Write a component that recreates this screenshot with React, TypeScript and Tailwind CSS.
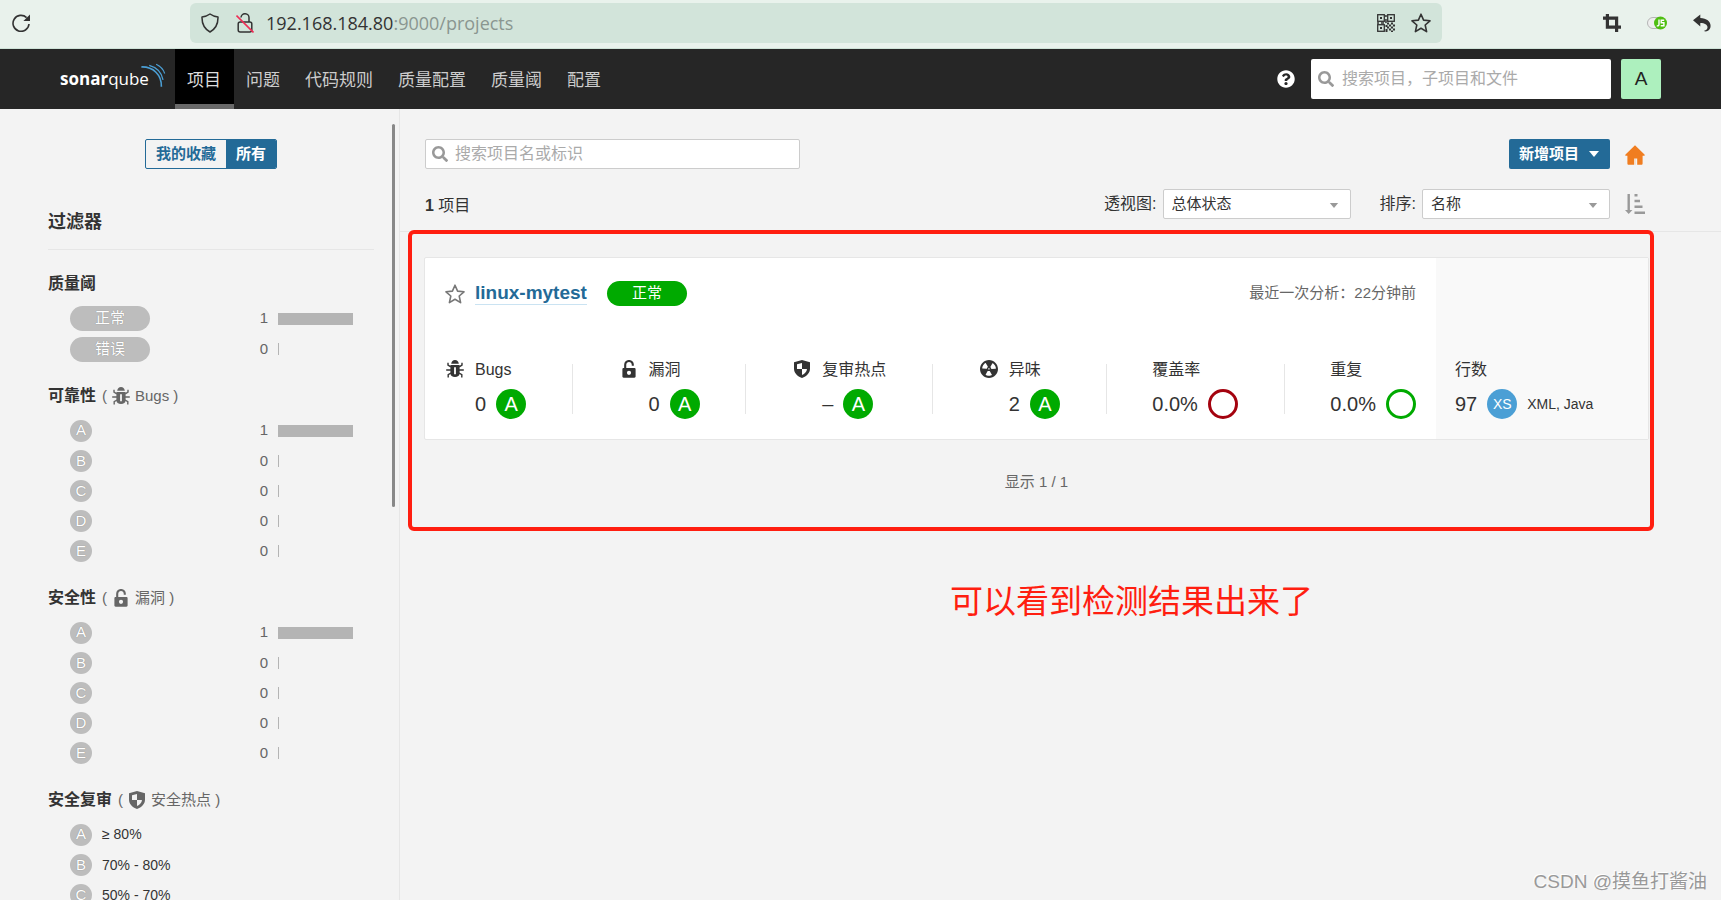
import type { ReactNode } from 'react'
import { FaQuestionCircle, FaSearch } from 'react-icons/fa'

/* ---------- icons ---------- */

type IconProps = { className?: string }

const BugIcon = ({ className = '' }: IconProps) => (
  <svg viewBox="0 0 18 18" className={className} aria-hidden="true">
    <path fill="currentColor" d="M5.2 3.800C5.400 1.600 7 .1 9 .1s3.600 1.500 3.800 3.700z" />
    <path
      fill="currentColor"
      fillRule="evenodd"
      d="M4.400 5h9.200v8.600c0 2.200-1.900 3.500-4.600 3.500s-4.600-1.300-4.600-3.500zM8.100 7.200v7h1.800v-7z"
    />
    <path
      fill="none"
      stroke="currentColor"
      strokeWidth="1.400"
      d="M2 2.800v2.200l2.800 1.800M16 2.800v2.200l-2.800 1.800M.2 10h5M12.800 10h5M5 13l-2.800 1.600v3M13 13l2.800 1.600v3"
    />
  </svg>
)

const LockIcon = ({ className = '' }: IconProps) => (
  <svg viewBox="0 0 18 18" className={className} aria-hidden="true">
    <path fill="none" stroke="currentColor" strokeWidth="2.1" d="M5.2 8.6V4.8a3.800 3.800 0 0 1 7.600 0v1" />
    <path
      fill="currentColor"
      fillRule="evenodd"
      d="M3.600 8h10.800c.7 0 1.200.5 1.200 1.200v7.400c0 .7-.5 1.200-1.200 1.200H3.600c-.7 0-1.200-.5-1.200-1.200V9.200C2.400 8.500 2.900 8 3.600 8zM9 10.700a2.100 2.100 0 1 0 0 4.200a2.100 2.100 0 1 0 0-4.200z"
    />
  </svg>
)

const ShieldIcon = ({ className = '' }: IconProps) => (
  <svg viewBox="0 0 18 18" className={className} aria-hidden="true">
    <path
      fill="currentColor"
      fillRule="evenodd"
      d="M9 0l8 2.200v6.300c0 4.500-3.300 7.900-8 9.500c-4.700-1.600-8-5-8-9.500V2.200zM9 3L4 4.300V9h5zM9 9v6c2.900-1.200 4.700-3.300 5-6z"
    />
  </svg>
)

const SmellIcon = ({ className = '' }: IconProps) => (
  <svg viewBox="2 2 12 12" className={className} aria-hidden="true">
    <path
      fill="currentColor"
      d="M8 2C4.700 2 2 4.700 2 8s2.700 6 6 6 6-2.700 6-6-2.700-6-6-6zm-.5 5.500h.9v.9h-.9v-.9zm-3.800.2c-.1 0-.2-.1-.2-.2 0-.4.1-1.200.6-2S5.300 4.200 5.600 4c.2 0 .3 0 .3.1l1.300 2.300c0 .1 0 .2-.1.2-.1.2-.2.3-.3.5-.1.2-.2.4-.2.5 0 .1-.1.2-.2.2l-2.700-.1zM9.900 12c-.3.2-1.100.5-2 .5-.9 0-1.700-.3-2-.5-.1 0-.1-.2-.1-.3l1.300-2.300c0-.1.1-.1.2-.1.2.1.3.1.5.1s.4 0 .5-.1c.1 0 .2 0 .2.1l1.300 2.300c.2.2.2.3.1.3zm2.500-4.100L9.700 8c-.1 0-.2-.1-.2-.2 0-.2-.1-.4-.2-.5 0-.1-.1-.3-.3-.4-.1 0-.1-.2-.1-.3l1.300-2.300c.1-.1.2-.1.3-.1.3.2 1 .7 1.500 1.500s.6 1.600.6 2c0 0-.1.1-.2.1z"
    />
  </svg>
)

const StarIcon = ({ className = '' }: IconProps) => (
  <svg viewBox="0 0 20 20" className={className} aria-hidden="true">
    <path
      fill="none"
      stroke="currentColor"
      strokeWidth="1.600"
      strokeLinejoin="round"
      d="M10 1.200l2.600 5.900 6.400.7-4.800 4.200 1.400 6.600-5.600-3.400-5.600 3.400 1.400-6.600L1 7.800l6.400-.7z"
    />
  </svg>
)

const ReloadIcon = () => (
  <svg viewBox="0 0 18 18" className="size-[18px]" aria-hidden="true">
    <path fill="none" stroke="currentColor" strokeWidth="1.600" d="M14.600 3.600A8 8 0 1 0 17 10" />
    <path fill="currentColor" d="M18 .4V7h-6.600z" />
  </svg>
)

const OutlineShield = () => (
  <svg viewBox="0 0 18 20" className="h-5 w-[18px]" aria-hidden="true">
    <path
      fill="none"
      stroke="currentColor"
      strokeWidth="1.500"
      strokeLinejoin="round"
      d="M9 1c2.200 1.700 4.800 2.600 8 2.900.2 6.800-2 11.700-8 15.100C3 15.600.8 10.700 1 3.900 4.200 3.600 6.800 2.700 9 1z"
    />
  </svg>
)

const InsecureLock = () => (
  <svg viewBox="0 0 18 20" className="h-5 w-[18px]" aria-hidden="true">
    <rect x="2.200" y="9" width="13.600" height="10" rx="2" fill="none" stroke="currentColor" strokeWidth="1.500" />
    <path fill="none" stroke="currentColor" strokeWidth="1.500" d="M5 4.500a4 4 0 0 1 8 .5v4" />
    <path stroke="#ef2d56" strokeWidth="1.600" d="M.5 2.500l17 17" />
  </svg>
)

const QrIcon = () => (
  <svg viewBox="0 0 18 18" className="size-[18px]" aria-hidden="true">
    <g fill="none" stroke="currentColor" strokeWidth="1.300">
      <rect x=".7" y=".7" width="6.600" height="6.600" />
      <rect x="10.700" y=".7" width="6.600" height="6.600" />
      <rect x=".7" y="10.700" width="6.600" height="6.600" />
    </g>
    <path
      fill="currentColor"
      d="M3 3h2v2H3zM13 3h2v2h-2zM3 13h2v2H3zM8.200 1h1.500v2H8.200zM8.200 5h1.500v4H8.200zM0 8.200h2v1.500H0zM4 8.200h3v1.500H4zM10 8.500h2v2h-2zM14 8.500h2v2h-2zM12 10.500h2v2h-2zM16 10.500h2v2h-2zM8.500 11h2v2h-2zM10 12.500h2v2h-2zM14 12.500h2v2h-2zM12 14.500h2v2h-2zM16 14.500h2v2h-2zM8.500 15h2v3h-2zM14 16.500h2V18h-2z"
    />
  </svg>
)

const CropIcon = () => (
  <svg viewBox="0 0 18 18" className="size-[18px]" aria-hidden="true">
    <path fill="none" stroke="currentColor" strokeWidth="3.200" d="M4.400 0v13.200H18M0 4.200h13.600V18" />
  </svg>
)

const ScriptToggle = () => (
  <svg viewBox="0 0 20 14" className="h-3.5 w-5" aria-hidden="true">
    <rect x=".5" y="1.500" width="16" height="11" rx="5.500" fill="#eee" stroke="#b5b5b5" />
    <circle cx="13.500" cy="7" r="6.500" fill="#4fbf12" />
    <path
      fill="none"
      stroke="#fff"
      strokeWidth="1.400"
      d="M12 3.600v5c0 1-.7 1.500-2.200 1.200M17.200 4.200h-3v2.500h2.700v3.100h-3.200"
    />
  </svg>
)

const BackArrow = () => (
  <svg viewBox="0 0 18 18" className="size-[18px]" aria-hidden="true">
    <path
      fill="currentColor"
      d="M0 6.300L7.300.5v3.600C13.500 4.300 17.600 7.500 17.600 12c0 2.400-1.400 4.300-3.800 5.300-1 .2-2.200 0-3-.2 2.600-.7 3.900-2 3.700-4-.2-2.300-2.600-4-7.200-4v3.400z"
    />
  </svg>
)

const HomeIcon = () => (
  <svg viewBox="0 0 20 20" className="size-5" aria-hidden="true">
    <path
      fill="#f07d20"
      d="M10 .2l9.500 9.200c.5.6.2 1.400-.5 1.400h-1.400v7.700c0 .7-.5 1.300-1.200 1.300h-4.200v-6.200h-1.400v6.200H3.600c-.7 0-1.200-.6-1.200-1.300v-7.700H1c-.7 0-1-.8-.5-1.400z"
    />
    <path fill="#f3f3f3" d="M9.200 13.400h1.600V20H9.200z" />
  </svg>
)

const SortIcon = () => (
  <svg viewBox="0 0 20 20" className="size-5" aria-hidden="true">
    <path
      fill="#999"
      d="M2.500 0h2.400v16h2.500L3.700 20 0 16h2.500zM9.500 0h3v2.500h-3zM9.500 5.800H15v2.500H9.500zM9.500 11.600h8v2.500h-8zM9.500 17.400H20v2.500H9.500z"
    />
  </svg>
)

const Caret = ({ className = '' }: IconProps) => (
  <svg viewBox="0 0 10 6" className={className} aria-hidden="true">
    <path fill="currentColor" d="M0 0h10L5 6z" />
  </svg>
)

/* ---------- data ---------- */

const navItems = ['项目', '问题', '代码规则', '质量配置', '质量阈', '配置']

const ratings = [
  { letter: 'A', count: 1 },
  { letter: 'B', count: 0 },
  { letter: 'C', count: 0 },
  { letter: 'D', count: 0 },
  { letter: 'E', count: 0 },
]

const reviewRatings = [
  { letter: 'A', range: '≥ 80%' },
  { letter: 'B', range: '70% - 80%' },
  { letter: 'C', range: '50% - 70%' },
]

const measures = [
  { label: 'Bugs', value: '0', icon: BugIcon },
  { label: '漏洞', value: '0', icon: LockIcon },
  { label: '复审热点', value: '–', icon: ShieldIcon },
  { label: '异味', value: '2', icon: SmellIcon },
  { label: '覆盖率', value: '0.0%', ring: 'border-[#a4030f]' },
  { label: '重复', value: '0.0%', ring: 'border-[#00aa00]' },
]

/* ---------- page parts ---------- */

const BrowserBar = () => (
  <div className="flex h-[49px] shrink-0 items-center border-b border-[#cfe3d8] bg-[#e9f2ec] pb-0.5 text-[#333]">
    <button aria-label="刷新" className="ml-3">
      <ReloadIcon />
    </button>
    <div className="ml-40 flex h-10 w-[1252px] min-w-0 items-center rounded-md bg-[#d2e4da] px-[11px]">
      <OutlineShield />
      <span className="ml-[17px]">
        <InsecureLock />
      </span>
      <span className="ml-3 flex-1 truncate font-['Open_Sans'] text-[18px] text-[#8a9690]">
        <span className="text-[#333]">192.168.184.80</span>:9000/projects
      </span>
      <QrIcon />
      <StarIcon className="ml-4 size-5" />
    </div>
    <div className="ml-auto flex items-center gap-[26px] pr-2.5">
      <CropIcon />
      <ScriptToggle />
      <BackArrow />
    </div>
  </div>
)

const Logo = () => (
  <a href="#" className="flex h-full w-[115px] items-center text-white" aria-label="sonarqube">
    <span className="font-['Open_Sans'] text-[17px] leading-5">
      <b>sonar</b>qube
    </span>
    <svg viewBox="422 186 76 76" className="-ml-2 mb-2 size-[25px] shrink-0" aria-hidden="true">
      <g fill="none" stroke="#4b9fd5" strokeWidth="5">
        <path d="M423 198c36-1 62 24 61 60" />
        <path d="M447 193c22 6 38 22 42 44" strokeWidth="4" />
        <path d="M468 190c13 6 22 15 26 28" strokeWidth="3.500" />
      </g>
    </svg>
  </a>
)

const Navbar = () => (
  <header className="flex h-[60px] shrink-0 items-center bg-[#262626] px-[60px]">
    <Logo />
    <nav className="flex h-full">
      {navItems.map((item, index) => (
        <a
          key={item}
          href="#"
          className={
            index === 0
              ? 'flex items-center border-b-[5px] border-[#696969] bg-black pt-2 pr-[13px] pl-3 text-[17px] text-[#ddd]'
              : 'flex items-center pt-[3px] pr-[13px] pl-3 text-[17px] text-[#ccc]'
          }
        >
          {item}
        </a>
      ))}
    </nav>
    <button aria-label="帮助" className="ml-auto text-white">
      <FaQuestionCircle className="size-[18px]" />
    </button>
    <label className="ml-4 flex h-10 w-[300px] items-center gap-2 rounded-xs bg-white px-[7px]">
      <FaSearch className="size-4 shrink-0 text-[#999]" />
      <input
        type="text"
        aria-label="搜索"
        placeholder="搜索项目，子项目和文件"
        className="w-full min-w-0 text-[16px] outline-none placeholder:text-[#aaa]"
      />
    </label>
    <button className="ml-2.5 size-10 rounded-xs bg-[#adf0be] text-[19px] text-[#222]">A</button>
  </header>
)

const Bar = ({ count }: { count: number }) => (
  <span className="flex flex-1 items-center justify-end gap-2.5 pr-[21px]">
    <span className="text-[15px] text-[#666]">{count}</span>
    <span className="flex w-[75px]">
      <span className={count > 0 ? 'h-3 w-full bg-[#b4b4b4]' : 'h-3 w-px bg-[#b4b4b4]'} />
    </span>
  </span>
)

const greyBadge =
  'flex items-center justify-center rounded-full bg-[#bdbdbd] text-[15px] text-white [text-shadow:0_0_1px_rgba(0,0,0,0.35)]'

const Facet = ({ title, hint, children }: { title: string; hint?: ReactNode; children: ReactNode }) => (
  <section className="mb-5">
    <h3 className="mb-[7px] flex h-6 items-center text-[16px]">
      <b>{title}</b>
      {hint && <span className="ml-1.5 flex items-center text-[15px] text-[#666]">{hint}</span>}
    </h3>
    {children}
  </section>
)

const FacetRow = ({ children }: { children: ReactNode }) => (
  <button className="flex h-[30px] w-full items-center pl-[22px] text-left first-of-type:h-[31px]">{children}</button>
)

const Sidebar = () => (
  <aside className="relative w-[400px] shrink-0 overflow-hidden border-r border-[#e6e6e6] pr-[25px] pl-12">
    <div className="mt-[30px] flex justify-center">
      <div className="flex h-[30px] overflow-hidden rounded-xs border border-[#236a97] text-[15px] font-bold">
        <button className="px-2.5 text-[#236a97]">我的收藏</button>
        <button className="bg-[#236a97] px-2.5 text-white">所有</button>
      </div>
    </div>

    <h2 className="mt-[41px] mb-[22px] border-b border-[#e6e6e6] pb-[15px] text-[18px] leading-6 font-bold">过滤器</h2>

    <Facet title="质量阈">
      <FacetRow>
        <span className={`${greyBadge} h-[25px] w-20`}>正常</span>
        <Bar count={1} />
      </FacetRow>
      <FacetRow>
        <span className={`${greyBadge} h-[25px] w-20`}>错误</span>
        <Bar count={0} />
      </FacetRow>
    </Facet>

    <Facet
      title="可靠性"
      hint={
        <>
          ( <BugIcon className="mx-[5px] size-[18px]" /> Bugs&nbsp;)
        </>
      }
    >
      {ratings.map((r) => (
        <FacetRow key={r.letter}>
          <span className={`${greyBadge} size-[22px]`}>{r.letter}</span>
          <Bar count={r.count} />
        </FacetRow>
      ))}
    </Facet>

    <Facet
      title="安全性"
      hint={
        <>
          ( <LockIcon className="mx-[5px] size-[18px]" /> 漏洞&nbsp;)
        </>
      }
    >
      {ratings.map((r) => (
        <FacetRow key={r.letter}>
          <span className={`${greyBadge} size-[22px]`}>{r.letter}</span>
          <Bar count={r.count} />
        </FacetRow>
      ))}
    </Facet>

    <Facet
      title="安全复审"
      hint={
        <>
          ( <ShieldIcon className="mx-[5px] size-[18px]" /> 安全热点&nbsp;)
        </>
      }
    >
      {reviewRatings.map((r) => (
        <FacetRow key={r.letter}>
          <span className={`${greyBadge} size-[22px]`}>{r.letter}</span>
          <span className="ml-2.5 text-[14px]">{r.range}</span>
        </FacetRow>
      ))}
    </Facet>

    {/* scrollbar thumb */}
    <span className="absolute top-[15px] right-1 h-[383px] w-[3px] rounded-full bg-[#888]" />
  </aside>
)

const SelectBox = ({ id, label, value }: { id: string; label: string; value: string }) => (
  <div className="flex items-center gap-1.5">
    <label htmlFor={id} className="text-[16px]">
      {label}:
    </label>
    <div className="relative">
      <select
        id={id}
        className="h-[30px] w-[188px] appearance-none rounded-xs border border-[#ccc] bg-white px-2 text-[15px]"
      >
        <option>{value}</option>
      </select>
      <Caret className="pointer-events-none absolute top-3.5 right-3 h-[5px] w-2.5 text-[#999]" />
    </div>
  </div>
)

const Toolbar = () => (
  <div className="border-b border-[#e6e6e6] pt-[30px] pr-[76px] pb-3 pl-[25px]">
    <div className="flex items-center">
      <label className="flex h-[30px] w-[375px] items-center gap-[7px] rounded-xs border border-[#ccc] bg-white px-1.5">
        <FaSearch className="size-4 shrink-0 text-[#999]" />
        <input
          type="text"
          aria-label="搜索项目"
          placeholder="搜索项目名或标识"
          className="w-full min-w-0 text-[16px] outline-none placeholder:text-[#aaa]"
        />
      </label>
      <button className="ml-auto flex h-[30px] items-center gap-2.5 rounded-xs bg-[#236a97] pr-[11px] pl-2.5 text-[15px] font-bold text-white">
        新增项目
        <Caret className="h-1.5 w-2.5" />
      </button>
      <button aria-label="设为主页" className="ml-[15px] pt-0.5">
        <HomeIcon />
      </button>
    </div>
    <div className="mt-5 flex items-center">
      <span className="pt-1 text-[16px]">
        <b>1</b> 项目
      </span>
      <div className="ml-auto flex items-center gap-[29px]">
        <SelectBox id="perspective" label="透视图" value="总体状态" />
        <SelectBox id="sort" label="排序" value="名称" />
      </div>
      <button aria-label="切换排序" className="ml-[15px]">
        <SortIcon />
      </button>
    </div>
  </div>
)

const ProjectCard = () => (
  <article className="flex h-[183px] rounded-xs border border-[#e6e6e6] bg-white">
    <div className="flex flex-1 flex-col px-5 pt-[23px]">
      <div className="flex h-[25px] items-center">
        <button aria-label="收藏" className="text-[#777]">
          <StarIcon className="size-5" />
        </button>
        <a
          href="#"
          className="ml-2.5 border-b border-[#cae3f2] text-[19px] leading-[22px] font-bold text-[#236a97]"
        >
          linux-mytest
        </a>
        <span className="ml-5 flex h-[25px] w-20 items-center justify-center rounded-full bg-[#00aa00] text-[15px] text-white">
          正常
        </span>
        <span className="ml-auto text-[15px] text-[#666]">最近一次分析：22分钟前</span>
      </div>
      <div className="mt-[52px] flex justify-between">
        {measures.map(({ label, value, icon: Icon, ring }, index) => (
          <div key={label} className="contents">
            {index > 0 && <span className="mt-1.5 h-[50px] w-px bg-[#e6e6e6]" />}
            <div className="flex">
              {Icon && <Icon className="mt-0.5 mr-[11px] ml-px size-[18px]" />}
              <div>
                <p className="text-[16px] leading-6">{label}</p>
                <p className="mt-[7px] flex items-center gap-2.5 text-[20px] leading-[30px]">
                  {value}
                  {ring ? (
                    <span className={`size-[30px] rounded-full border-[3px] ${ring}`} />
                  ) : (
                    <span className="flex size-[30px] items-center justify-center rounded-full bg-[#00aa00] text-white">
                      A
                    </span>
                  )}
                </p>
              </div>
            </div>
          </div>
        ))}
      </div>
    </div>
    <div className="w-[212px] bg-[#f9f9f9] px-[19px] pt-[100px]">
      <p className="text-[16px] leading-6">行数</p>
      <p className="mt-[7px] flex items-center gap-2.5 text-[20px] leading-[30px]">
        97
        <span className="flex size-[30px] items-center justify-center rounded-full bg-[#4b9fd5] text-[14px] text-white">
          XS
        </span>
        <span className="text-[14px]">XML, Java</span>
      </p>
    </div>
  </article>
)

const App = () => {
  return (
    <div className="relative flex h-screen flex-col overflow-hidden bg-[#f3f3f3] font-['Liberation_Sans','Noto_Sans_CJK_SC',sans-serif] text-[#333]">
      <BrowserBar />
      <Navbar />
      <div className="flex min-h-0 flex-1">
        <Sidebar />
        <main className="min-w-0 flex-1">
          <Toolbar />
          <div className="relative pt-[25px] pr-[72px] pl-6">
            <ProjectCard />
            <p className="mt-[30px] text-center text-[15px] leading-6 text-[#666]">显示 1 / 1</p>
            {/* highlight frame */}
            <div className="pointer-events-none absolute -top-0.5 right-[67px] left-2 h-[301px] rounded-md border-4 border-[#ff1e10]" />
          </div>
          <p className="mt-[83px] pl-[142px] text-center text-[33px] leading-[50px] text-[#ff1e10]">
            可以看到检测结果出来了
          </p>
        </main>
      </div>
      <span className="absolute right-3.5 bottom-1.5 text-[19px] leading-6 text-[#999] [text-shadow:-1px_-1px_0_#fff]">
        CSDN @摸鱼打酱油
      </span>
    </div>
  )
}

export default App
